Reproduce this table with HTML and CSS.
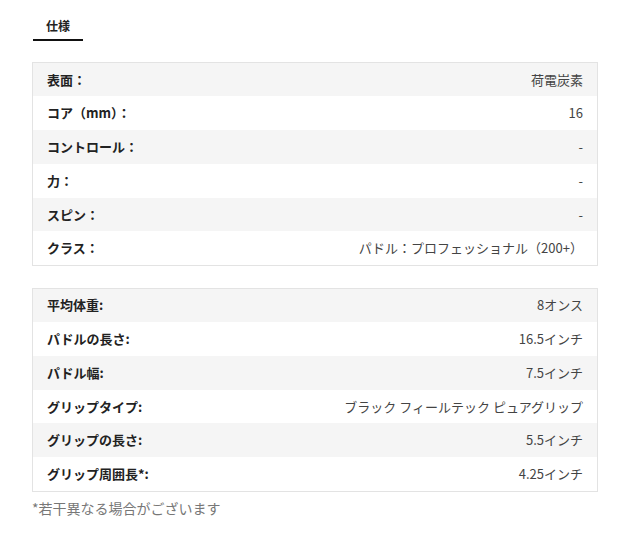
FILE: index.html
```html
<!DOCTYPE html>
<html lang="ja">
<head>
<meta charset="utf-8">
<title>仕様</title>
<link rel="stylesheet" href="styles.css">
</head>
<body>
<div class="page">
  <div class="tabs">
    <div class="tab">仕様</div>
  </div>
  <table class="spec">
    <tr><th>表面：</th><td>荷電炭素</td></tr>
    <tr><th>コア（mm）：</th><td>16</td></tr>
    <tr><th>コントロール：</th><td>-</td></tr>
    <tr><th>力：</th><td>-</td></tr>
    <tr><th>スピン：</th><td>-</td></tr>
    <tr><th>クラス：</th><td>パドル：プロフェッショナル（200+）</td></tr>
  </table>
  <table class="spec spec2">
    <tr><th>平均体重:</th><td>8オンス</td></tr>
    <tr><th>パドルの長さ:</th><td>16.5インチ</td></tr>
    <tr><th>パドル幅:</th><td>7.5インチ</td></tr>
    <tr><th>グリップタイプ:</th><td>ブラック フィールテック ピュアグリップ</td></tr>
    <tr><th>グリップの長さ:</th><td>5.5インチ</td></tr>
    <tr><th>グリップ周囲長*:</th><td>4.25インチ</td></tr>
  </table>
  <p class="note">*若干異なる場合がございます</p>
</div>
</body>
</html>
```
FILE: styles.css
```css
html, body {
  margin: 0;
  padding: 0;
  background: #fff;
}
body {
  font-family: "Noto Sans CJK JP", "Noto Sans", sans-serif;
  color: #222;
}
.page {
  padding: 16px 0 0 32px;
  width: 566px;
}
.tabs {
  display: flex;
}
.tab {
  margin-left: 1px;
  padding: 0 13px 3px;
  font-size: 12px;
  line-height: 20px;
  font-weight: 700;
  color: #222;
  border-bottom: 2px solid #111;
}
.spec {
  width: 100%;
  margin-top: 21px;
  border-collapse: collapse;
  border: 1px solid #e3e3e3;
  font-size: 13px;
}
.spec2 {
  margin-top: 22px;
}
.spec tr {
  height: 33.8px;
}
.spec tr:nth-child(odd) {
  background: #f5f5f5;
}
.spec th, .spec td {
  padding: 0 14px;
  line-height: 18px;
  vertical-align: middle;
}
.spec th {
  text-align: left;
  font-weight: 700;
  color: #222;
}
.spec td {
  text-align: right;
  color: #444;
}
.note {
  margin: 7px 0 0;
  font-size: 14px;
  line-height: 18px;
  color: #777;
}
```
